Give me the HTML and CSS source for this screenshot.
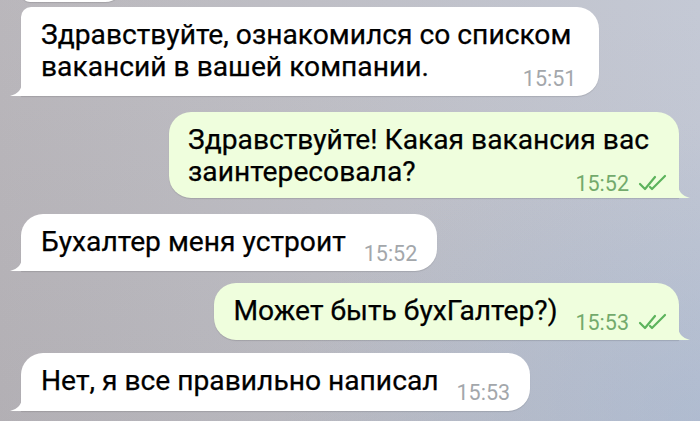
FILE: index.html
```html
<!DOCTYPE html>
<html lang="ru">
<head>
<meta charset="utf-8">
<title>Чат</title>
<link rel="stylesheet" href="styles.css">
</head>
<body>
<main class="chat">
  <div class="msg in prev"></div>

  <div class="msg in multi grouped tailed first">
    <p class="text">Здравствуйте, ознакомился со списком<br>вакансий в вашей компании.</p>
    <span class="meta"><span class="time">15:51</span></span>
    <svg class="tail tail-in" viewBox="0 0 12 14" aria-hidden="true"><path d="M12 0 C12 7 8 12 0 14 L12 14 Z"/></svg>
  </div>

  <div class="msg out multi tailed second">
    <p class="text">Здравствуйте! Какая вакансия вас<br>заинтересовала?</p>
    <span class="meta"><span class="time">15:52</span>
      <svg class="checks" viewBox="0 0 29 17" aria-hidden="true"><path d="M2 10 L7 15 L17 3"/><path d="M12 13 L14 15 L27 2"/></svg>
    </span>
    <svg class="tail tail-out" viewBox="0 0 12 14" aria-hidden="true"><path d="M0 0 C0 7 4 12 12 14 L0 14 Z"/></svg>
  </div>

  <div class="msg in single tailed third">
    <p class="text">Бухалтер меня устроит</p>
    <span class="meta"><span class="time">15:52</span></span>
    <svg class="tail tail-in" viewBox="0 0 12 14" aria-hidden="true"><path d="M12 0 C12 7 8 12 0 14 L12 14 Z"/></svg>
  </div>

  <div class="msg out single tailed fourth">
    <p class="text">Может быть бухГалтер?)</p>
    <span class="meta"><span class="time">15:53</span>
      <svg class="checks" viewBox="0 0 29 17" aria-hidden="true"><path d="M2 10 L7 15 L17 3"/><path d="M12 13 L14 15 L27 2"/></svg>
    </span>
    <svg class="tail tail-out" viewBox="0 0 12 14" aria-hidden="true"><path d="M0 0 C0 7 4 12 12 14 L0 14 Z"/></svg>
  </div>

  <div class="msg in single tailed fifth">
    <p class="text">Нет, я все правильно написал</p>
    <span class="meta"><span class="time">15:53</span></span>
    <svg class="tail tail-in" viewBox="0 0 12 14" aria-hidden="true"><path d="M12 0 C12 7 8 12 0 14 L12 14 Z"/></svg>
  </div>
</main>
</body>
</html>
```

FILE: styles.css
```css
html, body {
  margin: 0;
  padding: 0;
}

body {
  width: 700px;
  height: 421px;
  overflow: hidden;
  font-family: Roboto, "Noto Sans", "Liberation Sans", sans-serif;
  background:
    radial-gradient(ellipse 420px 300px at 100% 100%, rgba(150, 175, 210, 0.35), rgba(150, 175, 210, 0) 100%),
    linear-gradient(180deg, rgba(255,255,255,0.05) 0%, rgba(0,0,0,0.02) 100%),
    linear-gradient(90deg, #b6b3b8 0%, #bcbcc3 45%, #c1c6d3 100%);
}

.chat {
  display: flex;
  flex-direction: column;
  padding: 0 21px;
}

.msg {
  position: relative;
  box-sizing: border-box;
  border-radius: 22px;
  padding: 12px 20px 5px 20px;
  margin-top: 14px;
  box-shadow: 0 1px 1px rgba(0, 0, 0, 0.12);
}

.in {
  align-self: flex-start;
  background: #ffffff;
}

.out {
  align-self: flex-end;
  background: #effedd;
  padding-left: 19px;
  padding-right: 12px;
}

.in.tailed { border-bottom-left-radius: 0; }
.out.tailed { border-bottom-right-radius: 0; }
.grouped { border-top-left-radius: 10px; margin-top: 5px; }

.prev {
  width: 104px;
  height: 40px;
  margin-top: -38px;
  border-bottom-left-radius: 10px;
  padding: 0;
}

.text {
  margin: 0;
  font-size: 28.2px;
  line-height: 32px;
  color: #000;
  -webkit-text-stroke: 0.25px #000;
}

.meta {
  display: flex;
  align-items: baseline;
  gap: 9px;
  font-size: 21.5px;
  line-height: 24px;
  white-space: nowrap;
}

.in .time { color: #a3a7ab; }
.out .time { color: #73aa6c; }

.checks {
  width: 29px;
  height: 17px;
  fill: none;
  stroke: #5cb35c;
  stroke-width: 2.2;
  stroke-linecap: round;
  stroke-linejoin: round;
}

.single {
  display: flex;
  align-items: flex-start;
  gap: 18px;
}

.single .meta { margin-top: 16px; }

.multi {
  display: grid;
}

.multi .text,
.multi .meta {
  grid-area: 1 / 1;
}

.multi .text { padding-bottom: 8px; }

.multi .meta {
  justify-self: end;
  align-self: end;
}

.first { padding-right: 23px; }
.first .text { padding-right: 5px; }

.second { margin-top: 16px; padding-bottom: 2px; }
.second .text { padding-right: 18px; }

.third { margin-top: 16px; }
.fourth { margin-top: 12px; }
.fifth { margin-top: 13px; padding-bottom: 6px; }

.tail {
  position: absolute;
  bottom: 0;
  width: 12px;
  height: 14px;
}

.tail-in { left: -11px; fill: #ffffff; }
.tail-out { right: -11px; fill: #effedd; }
```
